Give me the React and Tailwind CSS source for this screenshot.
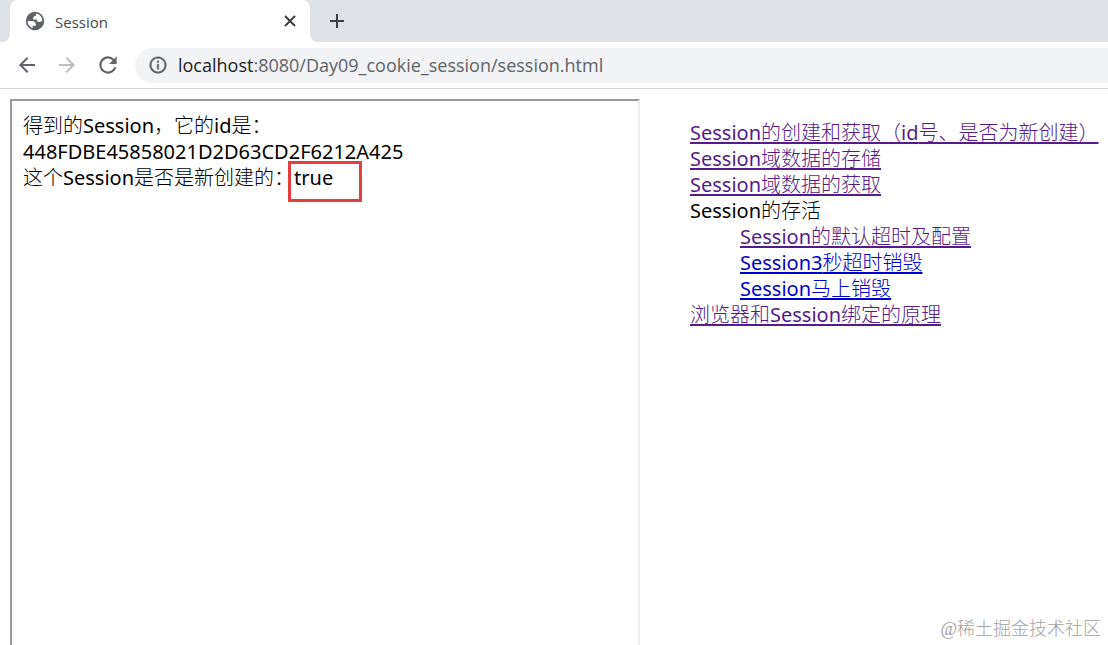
const visited = "text-[#551a8b] underline underline-offset-2 decoration-2 [text-decoration-skip-ink:none]";
const unvisited = "text-[#0000cc] underline underline-offset-2 decoration-2 [text-decoration-skip-ink:none]";

// Chinese text is set light; Latin words and digits inside it keep the regular weight.
function Mixed({ children }) {
  return children
    .split(/([A-Za-z0-9]+)/)
    .map((run, i) => (i % 2 ? <span key={i} className="font-normal">{run}</span> : run));
}

function GlobeIcon() {
  return (
    <svg viewBox="0 0 24 24" className="size-[22px] shrink-0" aria-hidden="true">
      <circle cx="12" cy="12" r="10" fill="#5f6368" />
      <path
        fill="#ffffff"
        d="M4 12h4.4c3.407.022 4.922 1.73 4.543 5.127H9.488v2.47A8.004 8.004 0 0 1 4 12zM19.986 11.514C19.327 12.504 18.332 13 17 13c-2.137 0-3.206-.916-3.206-2.75h-3.748c-.274-2.728.683-4.092 2.87-4.092 0-.975.327-1.597.811-1.97A8.004 8.004 0 0 1 19.986 11.514z"
      />
    </svg>
  );
}

function BackIcon({ flip }) {
  return (
    <svg viewBox="0 0 24 24" className={flip ? "size-6 rotate-180" : "size-6"} fill="currentColor" aria-hidden="true">
      <path d="M20 11H7.83l5.59-5.59L12 4l-8 8 8 8 1.41-1.41L7.83 13H20v-2z" />
    </svg>
  );
}

function ReloadIcon() {
  return (
    <svg viewBox="0 0 24 24" className="size-[26px]" fill="currentColor" aria-hidden="true">
      <path d="M17.65 6.35A7.958 7.958 0 0 0 12 4a8 8 0 1 0 7.73 10h-2.08A6 6 0 1 1 12 6c1.66 0 3.14.69 4.22 1.78L13 11h7V4l-2.35 2.35z" />
    </svg>
  );
}

function InfoIcon() {
  return (
    <svg viewBox="0 0 24 24" className="size-5 shrink-0" fill="#5f6368" stroke="#5f6368" strokeWidth="0.5" aria-hidden="true">
      <path d="M11 17h2v-6h-2v6zm1-15C6.48 2 2 6.48 2 12s4.48 10 10 10 10-4.48 10-10S17.52 2 12 2zm0 18c-4.41 0-8-3.59-8-8s3.59-8 8-8 8 3.59 8 8-3.59 8-8 8zM11 9h2V7h-2v2z" />
    </svg>
  );
}

function TabStrip() {
  return (
    <div className="flex h-[42px] items-end bg-[#dee1e6]">
      <div className="h-full w-[10px] bg-white">
        <div className="h-full rounded-br-lg bg-[#dee1e6]" />
      </div>
      <div className="flex h-full w-[300px] items-center rounded-t-lg bg-white pr-3 pl-[14px]">
        <GlobeIcon />
        <span className="ml-[9px] flex-1 pt-0.5 text-[15px] text-[#45494d]">Session</span>
        <button type="button" aria-label="Close tab" className="flex size-4 items-center justify-center text-[#3c4043]">
          <svg viewBox="0 0 12 12" className="size-3" stroke="currentColor" strokeWidth="2" aria-hidden="true">
            <path d="M1 1l10 10M11 1L1 11" />
          </svg>
        </button>
      </div>
      <div className="h-full flex-1 bg-white">
        <div className="flex h-full items-center rounded-bl-lg bg-[#dee1e6] pl-[19px]">
          <button type="button" aria-label="New tab" className="flex size-4 items-center justify-center text-[#3c4043]">
            <svg viewBox="0 0 16 16" className="size-4" stroke="currentColor" strokeWidth="2" aria-hidden="true">
              <path d="M8 1v14M1 8h14" />
            </svg>
          </button>
        </div>
      </div>
    </div>
  );
}

function Toolbar() {
  return (
    <div className="flex h-[47px] items-center border-b border-[#d9dbde] pl-[15px] text-[#5f6368]">
      <button type="button" aria-label="Back"><BackIcon /></button>
      <button type="button" aria-label="Forward" className="ml-4 text-[#babcbe]"><BackIcon flip /></button>
      <button type="button" aria-label="Reload" className="ml-4"><ReloadIcon /></button>
      <div className="ml-[14px] flex h-[35px] flex-1 items-center rounded-l-full bg-[#f1f3f4] pl-[13px]">
        <InfoIcon />
        <span className="ml-[10px] text-lg whitespace-nowrap">
          <span className="text-[#202124]">localhost</span>:8080/Day09_cookie_session/session.html
        </span>
      </div>
    </div>
  );
}

export default function App() {
  return (
    <div className="flex min-h-screen flex-col bg-white font-['Open_Sans','Noto_Sans_CJK_SC',sans-serif]">
      <TabStrip />
      <Toolbar />
      <div className="relative grid flex-1 grid-cols-[3fr_2fr] gap-12 pt-[10px] pl-[10px] font-['Noto_Sans','Noto_Sans_CJK_SC',sans-serif] text-[20px] leading-[26px] font-light text-black">
        <main className="border-2 border-b-0 border-t-[#9a9a9a] border-r-[#eeeeee] border-l-[#9a9a9a] px-[11px] pt-3">
          <p><Mixed>得到的Session，它的id是：</Mixed></p>
          <p><Mixed>448FDBE45858021D2D63CD2F6212A425</Mixed></p>
          <p>
            <Mixed>这个Session是否是新创建的：</Mixed>
            <span className="relative font-normal">
              true
              <span className="absolute -top-[3px] -left-[6px] h-[41px] w-[74px] border-3 border-[#e53e3e]" />
            </span>
          </p>
        </main>
        <nav className="pt-[21px] pl-0.5 whitespace-nowrap">
          <ul>
            <li><a href="#create" className={visited}><Mixed>Session的创建和获取（id号、是否为新创建）</Mixed></a></li>
            <li><a href="#store" className={visited}><Mixed>Session域数据的存储</Mixed></a></li>
            <li><a href="#read" className={visited}><Mixed>Session域数据的获取</Mixed></a></li>
            <li>
              <Mixed>Session的存活</Mixed>
              <ul className="pl-[50px]">
                <li><a href="#timeout" className={visited}><Mixed>Session的默认超时及配置</Mixed></a></li>
                <li><a href="#three" className={unvisited}><Mixed>Session3秒超时销毁</Mixed></a></li>
                <li><a href="#destroy" className={unvisited}><Mixed>Session马上销毁</Mixed></a></li>
              </ul>
            </li>
            <li><a href="#principle" className={visited}><Mixed>浏览器和Session绑定的原理</Mixed></a></li>
          </ul>
        </nav>
        <span className="absolute right-[7px] bottom-[3px] font-['Liberation_Serif','Noto_Sans_CJK_SC',serif] text-[18px] text-[#a3a3a3]">@稀土掘金技术社区</span>
      </div>
    </div>
  );
}
